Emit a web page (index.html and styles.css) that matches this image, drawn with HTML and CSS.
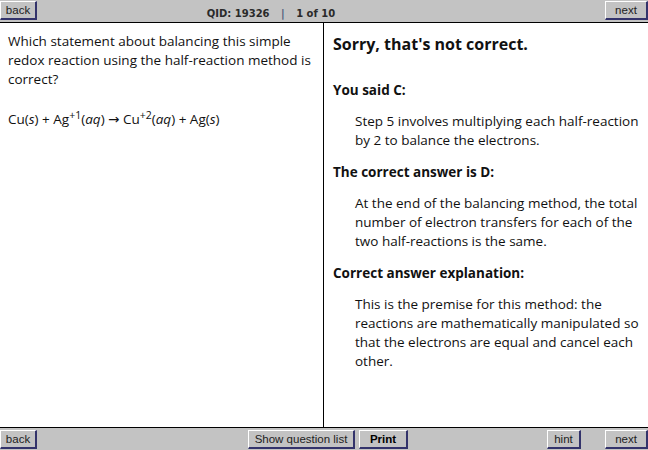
FILE: index.html
```html
<!DOCTYPE html>
<html lang="en">
<head>
  <meta charset="UTF-8" />
  <title>Question 19326</title>
  <link rel="stylesheet" href="styles.css">
</head>
<body>
  <div class="quiz">
    <div class="toolbar top-bar">
      <button class="nav-btn back-btn">back</button>
      <div class="qid">QID: 19326 <span class="sep">|</span> 1 of 10</div>
      <button class="nav-btn next-btn">next</button>
    </div>

    <div class="panes">
      <div class="question-pane">
        <p>Which statement about balancing this simple redox reaction using the half-reaction method is correct?</p>
        <p class="equation">Cu(<i>s</i>) + Ag<sup>+1</sup>(<i>aq</i>) &rarr; Cu<sup>+2</sup>(<i>aq</i>) + Ag(<i>s</i>)</p>
      </div>

      <div class="feedback-pane">
        <h2>Sorry, that's not correct.</h2>

        <h3>You said C:</h3>
        <p class="answer">Step 5 involves multiplying each half-reaction by 2 to balance the electrons.</p>

        <h3>The correct answer is D:</h3>
        <p class="answer">At the end of the balancing method, the total number of electron transfers for each of the two half-reactions is the same.</p>

        <h3>Correct answer explanation:</h3>
        <p class="answer">This is the premise for this method: the reactions are mathematically manipulated so that the electrons are equal and cancel each other.</p>
      </div>
    </div>

    <div class="toolbar bottom-bar">
      <button class="nav-btn back-btn">back</button>
      <div class="middle-btns">
        <button class="nav-btn list-btn">Show question list</button>
        <button class="nav-btn print-btn">Print</button>
      </div>
      <div class="right-btns">
        <button class="nav-btn hint-btn">hint</button>
        <button class="nav-btn next-btn">next</button>
      </div>
    </div>
  </div>
</body>
</html>
```

FILE: styles.css
```css
body {
  margin: 0;
  padding: 0;
  background-color: #fff;
  color: #111;
  font-family: "Open Sans", "DejaVu Sans", sans-serif;
}

.quiz {
  display: flex;
  flex-direction: column;
  height: 450px;
  width: 648px;
}

.toolbar {
  display: flex;
  height: 23px;
  background-color: #c3c3c3;
  box-sizing: border-box;
  align-items: flex-start;
}

.top-bar {
  border-bottom: 1px solid #000;
  justify-content: space-between;
  padding-top: 1px;
}

.bottom-bar {
  border-top: 1px solid #000;
  padding-top: 2px;
}

.nav-btn {
  height: 19px;
  padding: 0;
  margin: 0;
  background-color: #c3c3c3;
  border-top: 1px solid #fff;
  border-left: 1px solid #fff;
  border-right: 2px solid #33336b;
  border-bottom: 2px solid #33336b;
  font-family: "Liberation Sans", Arial, sans-serif;
  font-size: 11.5px;
  color: #222;
  cursor: pointer;
}

.back-btn { width: 37px; }
.next-btn { width: 43px; }
.hint-btn { width: 34px; }
.list-btn { width: 107px; }

.print-btn {
  width: 49px;
  font-weight: bold;
  color: #000;
}

.qid {
  font-family: "DejaVu Sans", Verdana, sans-serif;
  font-size: 10px;
  font-weight: bold;
  color: #2a2a2a;
  padding-top: 7px;
  margin-right: 100px;
}

.sep {
  color: #4b5a7a;
  margin: 0 8px;
}

.middle-btns {
  display: flex;
  gap: 4px;
  margin-left: 211px;
}

.right-btns {
  display: flex;
  gap: 24px;
  margin-left: auto;
}

.panes {
  flex: 1;
  display: flex;
  min-height: 0;
}

.question-pane {
  width: 324px;
  border-right: 1px solid #000;
  padding: 9px 8px;
  box-sizing: border-box;
  font-size: 13.5px;
  line-height: 19px;
}

.question-pane p {
  margin: 0 0 19px 0;
}

.question-pane .equation {
  margin-top: 21px;
}

.equation sup {
  font-size: 10.5px;
  line-height: 0;
  vertical-align: 5px;
}

.feedback-pane {
  flex: 1;
  padding: 9px 9px;
  font-size: 13.5px;
  line-height: 19px;
}

.feedback-pane h2 {
  font-size: 16px;
  margin: 0 0 25px 0;
  line-height: 24px;
}

.feedback-pane h3 {
  font-size: 13.5px;
  margin: 0 0 12px 0;
}

.answer {
  margin: 0 0 13px 22px;
}
```
